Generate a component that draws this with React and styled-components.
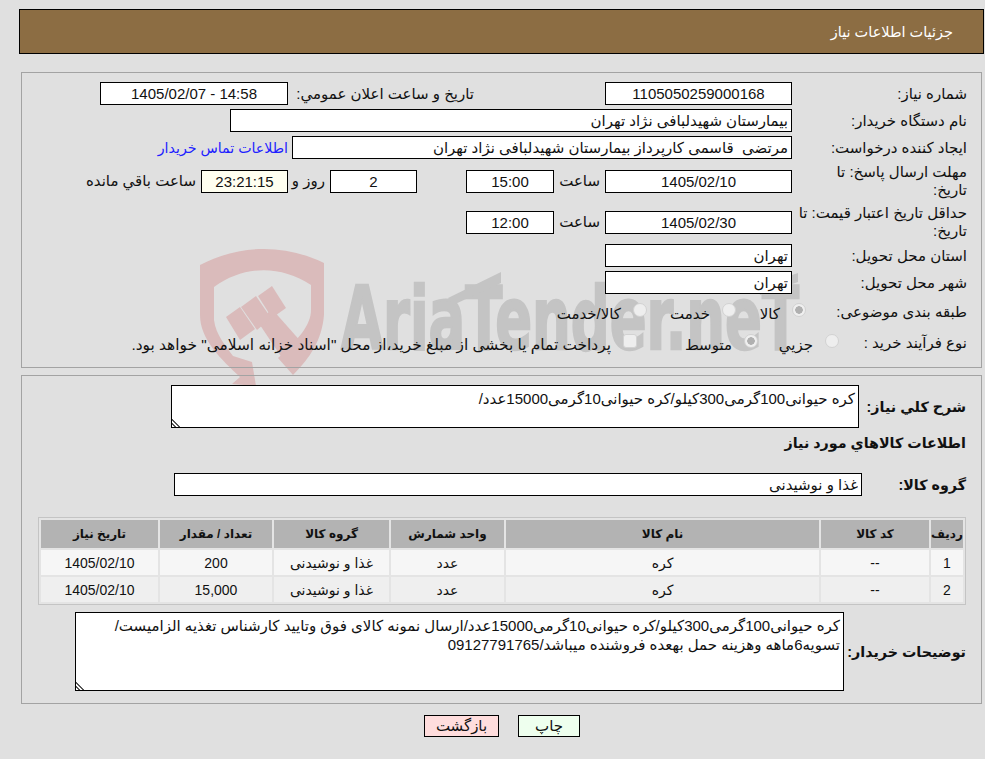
import React from 'react';
import styled, { createGlobalStyle } from 'styled-components';

const bodyFont = '"Liberation Sans", "DejaVu Sans", Tahoma, sans-serif';

const Global = createGlobalStyle`
    html, body { margin: 0; padding: 0; background: #e0e0e0; }
    body { font-family: ${bodyFont}; font-size: 15px; color: #111; }
    * { box-sizing: border-box; }
`;

const Page = styled.div`
    position: relative;
    direction: rtl;
    width: 985px;
    height: 759px;
    padding: 9px 0 0 0;
    overflow: hidden;
`;

const Watermark = styled.svg`
    position: absolute;
    left: 190px;
    top: 240px;
    width: 640px;
    height: 150px;
    direction: ltr;
`;

const Header = styled.header`
    position: relative;
    height: 45px;
    margin: 0 1px 0 19px;
    padding-right: 30px;
    background: #8c6d43;
    border: 1px solid #000;
    color: #fff;
    font-size: 14.5px;
    line-height: 44px;
`;

const Panel = styled.section`
    position: relative;
    margin: ${({ $top }) => $top}px 3px 0 21px;
    height: ${({ $height }) => $height}px;
    padding: ${({ $pad }) => $pad};
    border: 1px solid #a3a3a3;
    display: flex;
    flex-direction: column;
`;

const Row = styled.div`
    display: flex;
    align-items: center;
    height: ${({ $height }) => $height || 23}px;
    margin-bottom: ${({ $gap }) => $gap ?? 4}px;
`;

const Label = styled.div`
    flex: none;
    width: ${({ $width }) => $width || 175}px;
    padding-right: ${({ $pad }) => $pad || 0}px;
    line-height: 18px;
    font-weight: ${({ $bold }) => ($bold ? 700 : 400)};
    font-size: ${({ $bold }) => ($bold ? 14.3 : 15)}px;
`;

const Field = styled.input`
    flex: none;
    width: ${({ $width }) => $width}px;
    height: 23px;
    margin: ${({ $margin }) => $margin || 0};
    padding: 0 3px;
    border: 1px solid #000;
    background: ${({ $bg }) => $bg || '#fff'};
    color: #111;
    font: 15px ${bodyFont};
    text-align: ${({ $center }) => ($center ? 'center' : 'right')};
    direction: rtl;
    outline: none;
`;

const Inline = styled.span`
    flex: none;
    margin: ${({ $margin }) => $margin || 0};
    padding-right: ${({ $pad }) => $pad || 0}px;
    width: ${({ $width }) => ($width ? `${$width}px` : 'auto')};
    white-space: nowrap;
`;

const ContactLink = styled.a`
    flex: none;
    margin-right: 4px;
    color: #2020ff;
    font-size: 14.2px;
    white-space: nowrap;
`;

const Option = styled.label`
    flex: none;
    display: flex;
    align-items: center;
    gap: 12px;
    width: ${({ $width }) => $width}px;
    white-space: nowrap;
`;

const OptionText = styled.span`
    padding-top: 4px;
    font-size: ${({ $size }) => $size || 15}px;
`;

const Radio = styled.span`
    flex: none;
    width: 14px;
    height: 14px;
    margin-top: -3px;
    border-radius: ${({ $square }) => ($square ? '3px' : '50%')};
    border: 1px solid #d2d2d2;
    background: ${({ $on }) =>
        $on ? 'radial-gradient(circle, #b0b0b0 0 3.5px, #efefef 4px)' : '#eeeeee'};
`;

const Desc = styled.textarea`
    flex: none;
    display: block;
    width: ${({ $width }) => $width}px;
    height: ${({ $height }) => $height}px;
    padding: 3px;
    border: 1px solid #000;
    background: #fff;
    color: #111;
    font: 15px/19px ${bodyFont};
    direction: rtl;
    outline: none;
    resize: both;

    &::-webkit-resizer {
        background: linear-gradient(45deg, transparent 1.5px, #555 1.5px 3px, transparent 3px 4.5px, #555 4.5px 6px, transparent 6px);
    }
`;

const Heading = styled.h3`
    margin: 0;
    font-size: 14.3px;
    font-weight: 700;
    line-height: 18px;
`;

const Table = styled.table`
    width: 927px;
    margin: 0 0 7px 0;
    height: 88px;
    table-layout: fixed;
    border: 1px solid #c4c4c4;
    border-spacing: 2px;
    background: #e4e4e4;
`;

const Th = styled.th`
    width: ${({ $width }) => $width}px;
    height: 28px;
    padding: 0;
    background: #b3b3b3;
    font-size: 12px;
    font-weight: 700;
`;

const Td = styled.td`
    height: 25px;
    padding: 0;
    text-align: center;
    font-size: 14px;
    background: ${({ $alt }) => ($alt ? '#efefef' : '#f6f6f6')};
`;

const Actions = styled.div`
    position: relative;
    display: flex;
    justify-content: flex-start;
    gap: 19px;
    margin: 11px 0 0 0;
    padding-right: 405px;
`;

const Button = styled.button`
    width: ${({ $width }) => $width}px;
    height: 22px;
    padding: 0;
    border: 1px solid #000;
    background: ${({ $bg }) => $bg};
    color: #111;
    font: 15px ${bodyFont};
`;

const items = [
    { id: 1, qty: '200' },
    { id: 2, qty: '15,000' },
];

const App = () => (
    <Page>
        <Global />
        <Watermark viewBox="190 240 640 150">
            <g fill="#dabbbb">
                <path d="M200 265C240 244 285 244 324 263L324 315C322 340 310 358 293 375L278 358C298 340 311 325 311 310L311 285C280 265 245 265 214 287L214 320C216 335 225 345 233 356L252 362L256 386L232 384L240 377C222 360 200 340 200 315Z" />
                <path d="M258 322L272 309L303 344L286 364Z" />
                <path d="M226 317L240 307L255 329L240 340Z" />
                <path d="M241 307L256 296L271 318L257 330Z" />
                <path d="M258 296L272 286L286 308L272 318Z" />
            </g>
            <g fill="#c4c4c4">
                <text x="341" y="349" fontFamily="DejaVu Sans" fontWeight="700" fontSize="88" stroke="#c4c4c4" strokeWidth="2.5" textLength="458" lengthAdjust="spacingAndGlyphs">AriaTender.neT</text>
                <path d="M448 298L501 272V283L453 305Z" />
                <path d="M757 287L798 273V282L760 295Z" />
            </g>
        </Watermark>

        <Header>جزئیات اطلاعات نیاز</Header>

        <Panel $top={18} $height={296} $pad="9px 14px 0 0">
            <Row>
                <Label>شماره نیاز:</Label>
                <Field $width={187} $center readOnly value="1105050259000168" />
                <Label $width={317} $pad={131}>تاریخ و ساعت اعلان عمومي:</Label>
                <Field $width={188} $center readOnly value="14:58 - 1405/02/07" />
            </Row>
            <Row>
                <Label>نام دستگاه خریدار:</Label>
                <Field $width={562} readOnly value="بیمارستان شهیدلبافی نژاد تهران" />
            </Row>
            <Row>
                <Label>ایجاد کننده درخواست:</Label>
                <Field $width={500} readOnly value="مرتضی  قاسمی کارپرداز بیمارستان شهیدلبافی نژاد تهران" />
                <ContactLink>اطلاعات تماس خریدار</ContactLink>
            </Row>
            <Row $height={36}>
                <Label>مهلت ارسال پاسخ: تا<br />تاریخ:</Label>
                <Field $width={187} $center readOnly value="1405/02/10" />
                <Inline $width={51} $pad={5}>ساعت</Inline>
                <Field $width={88} $center readOnly value="15:00" />
                <Field $width={87} $center $margin="0 49px 0 0" readOnly value="2" />
                <Inline $width={42} $pad={5}>روز و</Inline>
                <Field $width={87} $center $bg="#fffff0" readOnly value="23:21:15" />
                <Inline $margin="0 5px 0 0">ساعت باقي مانده</Inline>
            </Row>
            <Row $height={38} $gap={3}>
                <Label>حداقل تاریخ اعتبار قیمت: تا تاریخ:</Label>
                <Field $width={187} $center readOnly value="1405/02/30" />
                <Inline $width={51} $pad={5}>ساعت</Inline>
                <Field $width={88} $center readOnly value="12:00" />
            </Row>
            <Row>
                <Label>استان محل تحویل:</Label>
                <Field $width={187} readOnly value="تهران" />
            </Row>
            <Row $gap={6}>
                <Label>شهر محل تحویل:</Label>
                <Field $width={187} readOnly value="تهران" />
            </Row>
            <Row $gap={8}>
                <Label $width={161}>طبقه بندی موضوعی:</Label>
                <Option $width={70}><Radio $on /><OptionText>کالا</OptionText></Option>
                <Option $width={89}><Radio /><OptionText>خدمت</OptionText></Option>
                <Option $width={100}><Radio /><OptionText>کالا/خدمت</OptionText></Option>
            </Row>
            <Row>
                <Label $width={128}>نوع فرآیند خرید :</Label>
                <Option $width={81}><Radio /><OptionText>جزیي</OptionText></Option>
                <Option $width={121}><Radio $on /><OptionText>متوسط</OptionText></Option>
                <Option $width={520}><Radio $square /><OptionText $size={15.4}>پرداخت تمام یا بخشی از مبلغ خرید،از محل "اسناد خزانه اسلامی" خواهد بود.</OptionText></Option>
            </Row>
        </Panel>

        <Panel $top={7} $height={329} $pad="9px 15px 0 15px">
            <Row $height={43} $gap={6}>
                <Label $width={107} $bold>شرح کلي نياز:</Label>
                <Desc $width={688} $height={43} readOnly value="کره حیوانی100گرمی300کیلو/کره حیوانی10گرمی15000عدد/" />
            </Row>
            <Row $height={18} $gap={21}>
                <Heading>اطلاعات کالاهاي مورد نياز</Heading>
            </Row>
            <Row $gap={21}>
                <Label $width={104} $bold>گروه کالا:</Label>
                <Field $width={688} readOnly value="غذا و نوشیدنی" />
            </Row>
            <Table>
                <thead>
                    <tr>
                        <Th $width={32}>ردیف</Th>
                        <Th $width={108}>کد کالا</Th>
                        <Th $width={313}>نام کالا</Th>
                        <Th $width={113}>واحد شمارش</Th>
                        <Th $width={115}>گروه کالا</Th>
                        <Th $width={112}>تعداد / مقدار</Th>
                        <Th $width={117}>تاریخ نیاز</Th>
                    </tr>
                </thead>
                <tbody>
                    {items.map((it, i) => (
                        <tr key={it.id}>
                            <Td $alt={i === 1}>{it.id}</Td>
                            <Td $alt={i === 1}>--</Td>
                            <Td $alt={i === 1}>کره</Td>
                            <Td $alt={i === 1}>عدد</Td>
                            <Td $alt={i === 1}>غذا و نوشیدنی</Td>
                            <Td $alt={i === 1}>{it.qty}</Td>
                            <Td $alt={i === 1}>1405/02/10</Td>
                        </tr>
                    ))}
                </tbody>
            </Table>
            <Row $height={79} $gap={0}>
                <Label $width={122} $bold>توضیحات خریدار:</Label>
                <Desc $width={769} $height={79} readOnly value="کره حیوانی100گرمی300کیلو/کره حیوانی10گرمی15000عدد/ارسال نمونه کالای فوق وتایید کارشناس تغذیه الزامیست/تسویه6ماهه وهزینه حمل بهعده فروشنده میباشد/09127791765" />
            </Row>
        </Panel>

        <Actions>
            <Button $width={62} $bg="#eeffee">چاپ</Button>
            <Button $width={75} $bg="#ffdddd">بازگشت</Button>
        </Actions>
    </Page>
);

export default App;
